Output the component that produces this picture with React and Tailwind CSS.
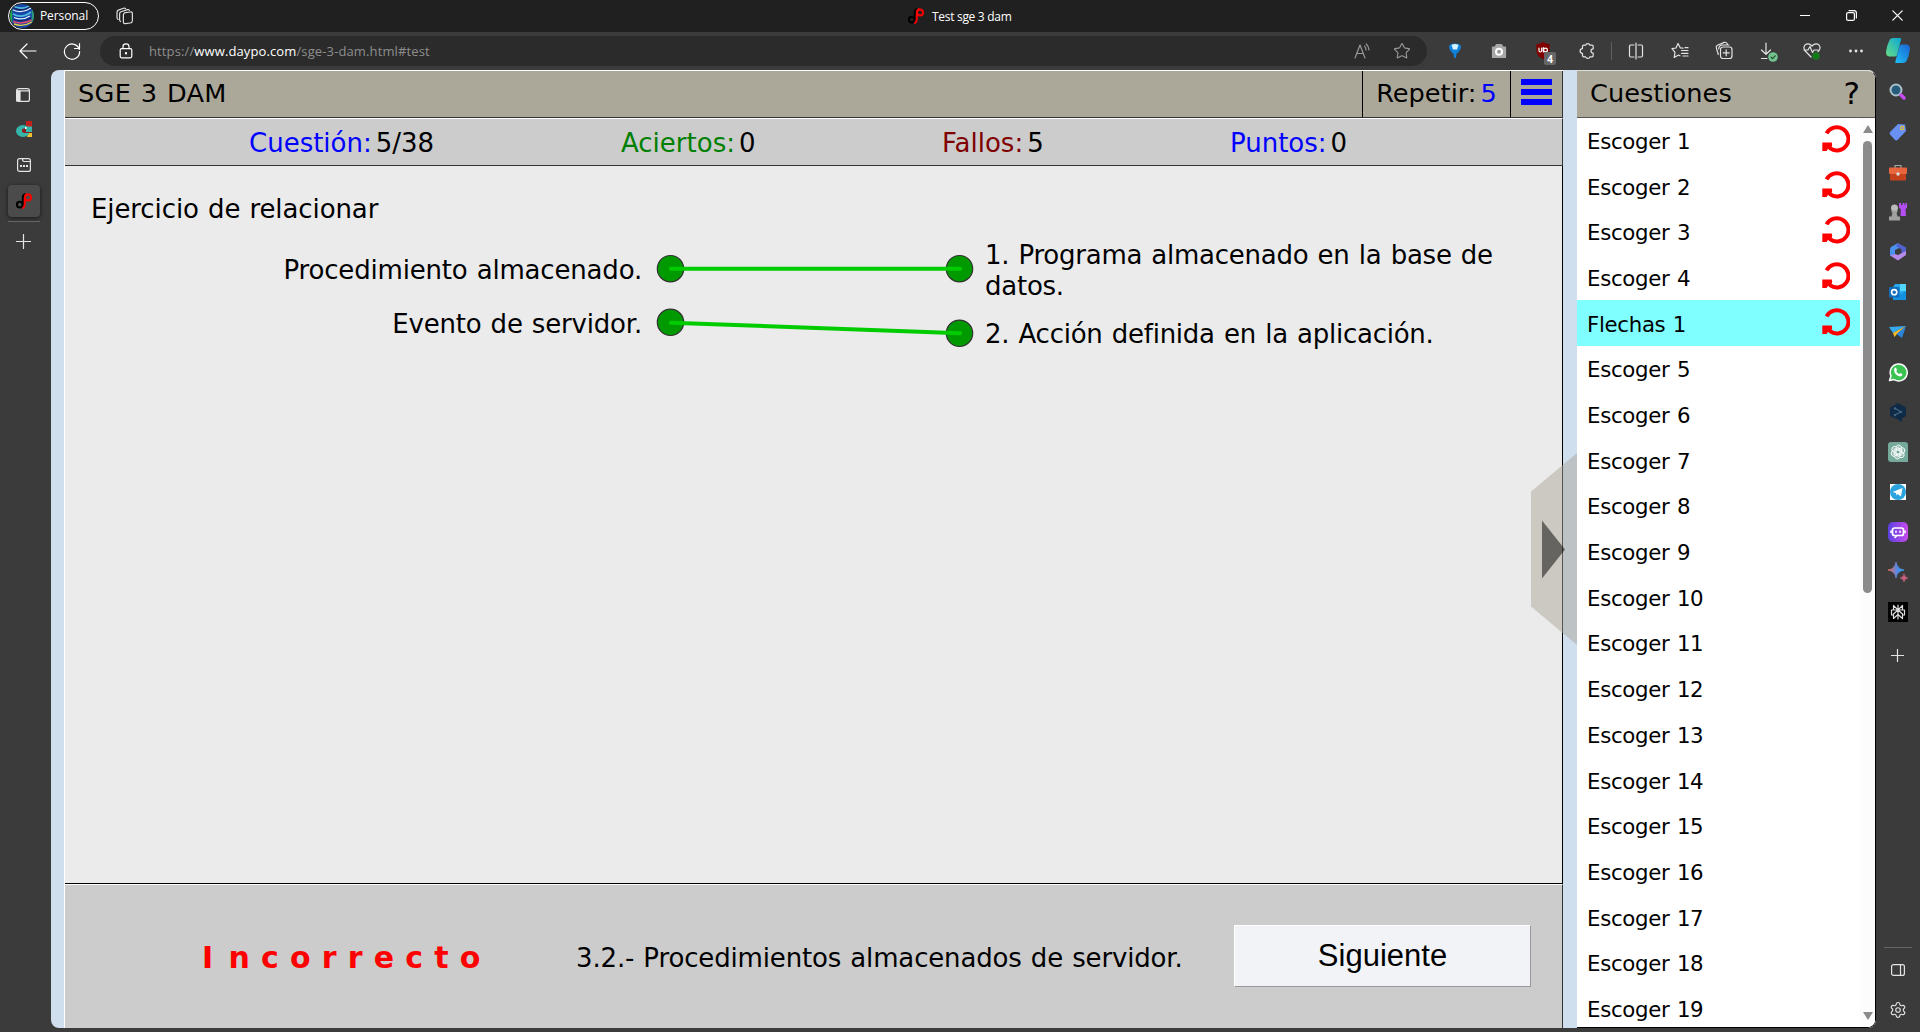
import { Star, Settings } from "lucide-react";

const V = "font-['DejaVu_Sans',sans-serif] whitespace-nowrap leading-none";
const S = "font-['Open_Sans',sans-serif] whitespace-nowrap leading-none";

function Svg({ w = 20, h = 20, vb, children, className = "" }) {
  return (
    <svg width={w} height={h} viewBox={vb || `0 0 ${w} ${h}`} fill="none" stroke="currentColor" strokeWidth="1.2" strokeLinecap="round" strokeLinejoin="round" className={`block shrink-0 ${className}`}>
      {children}
    </svg>
  );
}

const DaypoLogo = () => (
  <Svg w={16} h={16}>
    <g strokeWidth="2">
      <circle cx="3.8" cy="11.6" r="2.9" stroke="#000" />
      <path d="M6.8 11.5V4.5Q6.8 2 9 1.2" stroke="#000" />
      <circle cx="12" cy="4.4" r="3" stroke="#f00" />
      <path d="M11 1.3Q9 2 8.8 5V11Q8.8 14 7 15" stroke="#f00" />
    </g>
  </Svg>
);

const Redo = () => (
  <svg width="28" height="28" viewBox="0 0 28 28" fill="none" className="block">
    <path d="M4.6 8.4A11.6 11.6 0 1 1 8 23.2" stroke="#f00" strokeWidth="4" />
    <path d="M0.3 17.400H9.800L10.200 20L8.500 25L6 24L4.500 26H0.300Z" fill="#f00" />
  </svg>
);

function TitleBar() {
  return (
    <div className="flex h-8 items-center bg-[#202020] text-white">
      <div className="ml-2 flex h-7 w-[91px] items-center rounded-full border border-white">
        <svg width="24" height="24" viewBox="0 0 24 24" className="ml-px block">
          <defs>
            <clipPath id="av"><circle cx="12" cy="12" r="12" /></clipPath>
          </defs>
          <g clipPath="url(#av)" fill="none">
            <rect width="24" height="24" fill="#1746a8" />
            <path d="M3 2Q12 7 21 1M3 10Q12 15 21 8" stroke="#4fb8dd" strokeWidth="1.8" />
            <path d="M3 6Q12 10 21 4M4 13.500Q12 17 20 12" stroke="#dfeefa" strokeWidth="1.300" />
            <path d="M4 4Q12 8 20 3M4 15.500Q13 19 21 14" stroke="#19245f" strokeWidth="1.300" />
            <path d="M3 17.500Q12 21 22 16" stroke="#e34a70" strokeWidth="1.400" />
            <path d="M4 20Q13 23.500 22 18" stroke="#e8d33a" strokeWidth="1.400" />
            <path d="M1 5V19" stroke="#22a548" strokeWidth="2.500" />
            <path d="M23 6V18" stroke="#2a9d7c" strokeWidth="2.500" />
          </g>
        </svg>
        <span className={`${S} ml-[6px] text-[12px] tracking-[-0.1px]`}>Personal</span>
      </div>
      <Svg w={18} h={18} className="ml-[17px] text-[#ddd]">
        <rect x="7.400" y="5" width="9" height="11" rx="2" transform="skewY(-8) translate(0 2)" />
        <path d="M4.500 14.500Q3.600 14 3.600 12.500V7Q3.600 5.400 5 4.800L11.500 2.600Q12.800 2.200 13.300 3.400M2.200 12.500Q1 12 1 10.500V5.300Q1 3.700 2.400 3.100L7.500 1.200Q8.800.8 9.600 1.600" />
      </Svg>
      <div className="ml-[774px] flex items-center gap-2">
        <DaypoLogo />
        <span className={`${S} pt-[2px] text-[12px] tracking-[-0.3px]`}>Test sge 3 dam</span>
      </div>
      <div className="ml-auto flex items-center">
        <div className="flex w-[46px] justify-center"><div className="h-px w-[10px] bg-white" /></div>
        <div className="flex w-[46px] justify-center">
          <Svg w={11} h={11}><rect x="0.6" y="2.6" width="7.8" height="7.8" rx="1.5" /><path d="M3 0.6H8Q10.4.6 10.4 3V8" /></Svg>
        </div>
        <div className="flex w-[46px] justify-center">
          <Svg w={11} h={11}><path d="M.8.8L10.2 10.2M10.2.8L.8 10.2" /></Svg>
        </div>
      </div>
    </div>
  );
}

const Cell = ({ children }) => <div className="flex w-11 shrink-0 items-center justify-center">{children}</div>;

function Toolbar() {
  return (
    <div className="flex h-[38px] items-center bg-[#3b3b3b] text-[#e4e4e4]">
      <Svg w={18} h={16} className="ml-[19px] text-white"><path d="M17 8H1.2M8 1L1 8L8 15" /></Svg>
      <Svg w={18} h={18} className="ml-[26px] text-white"><path d="M16.3 7.5A7.6 7.6 0 1 0 16.6 9.5M16.5 1.5V6.5H11.5" /></Svg>
      <div className="ml-[19px] flex h-[30px] w-[1327px] items-center rounded-full bg-[#2b2b2b]">
        <Svg w={14} h={16} className="ml-[19px] text-white"><rect x="1.2" y="5.6" width="11.6" height="9.2" rx="1.5" /><path d="M4 5.5V3.6Q4 .8 7 .8T10 3.6V5.5" /><circle cx="7" cy="10.3" r=".6" fill="currentColor" /></Svg>
        <span className={`${S} ml-4 pt-[2px] text-[13px] tracking-[0.12px] text-[#8e8e8e]`}>
          https://<span className="text-white">www.daypo.com</span>/sge-3-dam.html#test
        </span>
        <Svg w={16} h={16} className="ml-auto text-[#999]"><path d="M1 15L6 2L11 15M2.700 10.500H9.300M10.500 3.200Q12 4.800 12 7M12.200 1Q15 3.500 15 7" /></Svg>
        <Star size={18} strokeWidth={1.5} className="mr-4 ml-[23px] text-[#999]" />
      </div>
      <div className="ml-[6px] flex">
        <Cell>
          <Svg w={14} h={18}><path d="M1 5Q1 1.500 7 1.500T13 5Q13 8 8.500 12L7.800 16H6.200L5.500 12Q1 8 1 5Z" fill="#1180d8" stroke="none" /><path d="M3.500 3Q7 1 10.500 3L9 7.500H5Z" fill="#d5f3ff" stroke="none" /></Svg>
        </Cell>
        <Cell>
          <Svg w={16} h={16}><path d="M1.500 4H4L5.500 1.500H10.500L12 4H14.500V14.500H1.500Z" fill="#a8a8a8" stroke="#a8a8a8" /><circle cx="8" cy="8.800" r="3" stroke="#fff" strokeWidth="2" fill="#999" /></Svg>
        </Cell>
        <Cell>
          <div className="relative">
            <Svg w={16} h={17}><path d="M8 .5Q11 2.500 14 2.500V8Q14 13.500 8 16.500Q2 13.500 2 8V2.500Q5 2.500 8 .5Z" fill="#800000" stroke="#800000" /><path d="M4 6V8.500Q4 10 5.300 10T6.700 8.500V6M8.300 5.500V10" stroke="#fff" /><circle cx="10.500" cy="8" r="1.900" stroke="#fff" /></Svg>
            <span className={`${S} absolute top-[10px] left-[9px] flex h-[13px] w-3 items-center justify-center rounded-[2px] bg-[#666] text-[10px] font-bold text-white`}>4</span>
          </div>
        </Cell>
        <Cell>
          <Svg w={18} h={18}><path d="M4.500 4.500Q4.500 3.200 5.800 3.200H7.700A2.100 2.100 0 0 1 11.800 3.200H14Q15.200 3.200 15.200 4.500V6.800A2.200 2.200 0 0 0 15.200 11.200V13.500Q15.200 14.800 14 14.800H11.800A2.100 2.100 0 0 1 7.700 14.800H5.800Q4.500 14.800 4.500 13.500V11.400A2.400 2.400 0 0 1 4.500 6.600Z" /></Svg>
        </Cell>
      </div>
      <div className="ml-[2px] h-[18px] w-px bg-[#606060]" />
      <div className="ml-[2px] flex">
        <Cell><Svg w={18} h={18}><path d="M7 3H3.500Q2.500 3 2.500 4.500V13.500Q2.500 15 3.500 15H7M11 3H14.500Q15.500 3 15.500 4.500V13.500Q15.500 15 14.500 15H11M9 1V17" /></Svg></Cell>
        <Cell><Svg w={18} h={18}><path d="M12 6.200L9.400 6L7 1.500L5 6L1 6.700L4 10.400L3.200 15.500L7.500 13L9 13.800M10.500 8.500H17M10.500 11.300H17M12 14H17M14 5.700H17" /></Svg></Cell>
        <Cell><Svg w={18} h={19}><rect x="5.500" y="6" width="11.500" height="11.500" rx="2.500" /><path d="M11.200 8.800V14.800M8.200 11.800H14.200M3.300 13.500L1.300 6.800Q.8 5 2.500 4.300L9.300 1.400Q11.200.8 12 2.400L12.500 3.800M3.700 8Q3.700 4 8 4H14" /></Svg></Cell>
        <Cell>
          <div className="relative">
            <Svg w={16} h={18}><path d="M6 1V12M1.500 8L6 12.300L10.500 8M1.500 16.500H7" /></Svg>
            <Svg w={10} h={10} className="absolute top-[10px] left-[8px]"><circle cx="5" cy="5" r="4.800" fill="#74c48f" stroke="none" /><path d="M3 5.200L4.500 6.700L7.200 3.800" stroke="#234b30" /></Svg>
          </div>
        </Cell>
        <Cell>
          <Svg w={18} h={18}><path d="M8 15L1.800 8.500Q0 5.500 2 3Q5.500.5 9 4Q12.500.5 16 3Q18 5.500 16 8.500L15 9.500M1 8H5L7 4.500L9.500 10.500L11 8H15" /><circle cx="13" cy="14" r="3.800" fill="#127a1b" stroke="none" /></Svg>
        </Cell>
        <Cell><Svg w={16} h={4}><g fill="currentColor" stroke="none"><circle cx="2.500" cy="2" r="1.400" /><circle cx="8" cy="2" r="1.400" /><circle cx="13.500" cy="2" r="1.400" /></g></Svg></Cell>
      </div>
      <svg width="24" height="25" viewBox="0 0 24 25" className="ml-[8px] block">
        <defs>
          <linearGradient id="c1" x1="0" y1="1" x2="1" y2="0"><stop stopColor="#68df85" /><stop offset="1" stopColor="#0aa5d6" /></linearGradient>
          <linearGradient id="c2" x1="0" y1="1" x2="1" y2="0"><stop stopColor="#1cc0f4" /><stop offset="1" stopColor="#1b62d5" /></linearGradient>
        </defs>
        <path d="M7 0H14Q15.500 0 15 2L11 17Q10.500 18.500 9 18.500H3Q0 18 0 14Q1 7 3.500 2Q4.500 0 7 0Z" fill="url(#c1)" />
        <path d="M16 6.500H21Q24 7 24 11Q23 18 20.500 23Q19.500 25 17 25H10Q8.500 25 9.500 23L13.500 8.500Q14 6.500 16 6.500Z" fill="url(#c2)" />
      </svg>
    </div>
  );
}

function LeftRail() {
  return (
    <div className="flex w-[51px] shrink-0 flex-col bg-[#3b3b3b] text-[#e4e4e4]">
      <div className="flex w-[47px] flex-col items-center">
        <Svg w={14} h={14} className="mt-[18px] mr-px"><rect x=".6" y=".6" width="12.800" height="12.800" rx="2" /><path d="M.6 2.800H13.400" /><rect x=".6" y="3" width="3.400" height="10" fill="currentColor" /></Svg>
        <svg width="16" height="16" viewBox="0 0 16 16" className="mt-[19px] ml-px block">
          <path d="M10 0H16V12H10Z" fill="#c4201c" />
          <path d="M12 12H16V16H11Z" fill="#f3bf2d" />
          <ellipse cx="7" cy="10" rx="7" ry="6" fill="#34b5a8" />
          <path d="M10 5.500H16V11H10Z" fill="#34b5a8" />
          <path d="M6 8L10 7V11H16V12H8L6 11Z" fill="#8c1d20" />
          <rect x="9" y="6" width="1.500" height="2" fill="#fff" />
        </svg>
        <Svg w={14} h={14} className="mt-[21px] ml-px"><rect x=".6" y=".6" width="12.800" height="12.800" rx="2" /><path d="M5.500.6Q5.500 3.500 7 3.500H13.400" /><g fill="currentColor" stroke="none"><rect x="3" y="7" width="2" height="2" /><rect x="6" y="7" width="2" height="2" /><rect x="9" y="7" width="2" height="2" /></g></Svg>
        <div className="mt-[13px] ml-px flex h-8 w-8 items-center justify-center rounded-[4px] bg-[#4b4b4b] shadow-[0_1px_4px_rgba(0,0,0,.6)]"><DaypoLogo /></div>
        <div className="mt-1 ml-px h-px w-8 bg-[#666]" />
        <Svg w={15} h={15} className="mt-3"><path d="M7.500.5V14.500M.5 7.500H14.500" /></Svg>
      </div>
    </div>
  );
}

function Stat({ label, value, color, className }) {
  return (
    <div className={`flex shrink-0 ${className}`}>
      <span className={color}>{label}</span>
      <span className="ml-[4px]">{value}</span>
    </div>
  );
}

function Quiz() {
  return (
    <main className={`${V} relative flex w-[1499px] shrink-0 flex-col border-t border-l border-white bg-[#ebebeb] text-[26px] text-black`}>
      <header className="flex h-[47px] items-center border-r border-b border-[#333] bg-[#aca899]">
        <span className="ml-[13px] text-[25.600px] tracking-[0.35px] [word-spacing:1px]">SGE 3 DAM</span>
        <div className="ml-auto flex h-full w-[148px] items-center justify-center border-l border-black"><span className="text-[25.600px]">Repetir:<span className="ml-[4px] text-[#00f]">5</span></span></div>
        <div className="flex h-full w-[52px] flex-col items-center justify-center gap-[4px] border-l border-black pb-[3px]">
          <div className="h-[6px] w-[31px] bg-[#00f]" />
          <div className="h-[6px] w-[31px] bg-[#00f]" />
          <div className="h-[6px] w-[31px] bg-[#00f]" />
        </div>
      </header>
      <section className="flex h-12 items-center border-t border-r border-b border-t-white border-r-[#333] border-b-[#333] bg-[#ccc] pt-[2px]">
        <Stat label="Cuestión:" value="5/38" color="text-[#00f]" className="ml-[184px] w-[372px]" />
        <Stat label="Aciertos:" value="0" color="text-[#008000]" className="w-[321px]" />
        <Stat label="Fallos:" value="5" color="text-[#800000]" className="w-[288px]" />
        <Stat label="Puntos:" value="0" color="text-[#00f]" className="" />
      </section>
      <section className="relative flex h-[718px] flex-col border-r border-b border-black">
        <p className="mt-[30px] ml-[26px] tracking-[-0.1px] [word-spacing:1px]">Ejercicio de relacionar</p>
        <div className="mt-[17px] flex">
          <div className="flex w-[577px] flex-col items-end gap-[28px] pt-[18px] tracking-[-0.18px] [word-spacing:1px]">
            <p>Procedimiento almacenado.</p>
            <p>Evento de servidor.</p>
          </div>
          <svg width="320" height="120" viewBox="642 239 320 120" className="block overflow-visible">
            <g fill="#090" stroke="#333" strokeWidth="1.200">
              <circle cx="670.500" cy="268.700" r="13.200" /><circle cx="959.500" cy="268.700" r="13.200" />
              <circle cx="670.500" cy="322.300" r="13.200" /><circle cx="959.500" cy="333.300" r="13.200" />
            </g>
            <path d="M671 268.800H960M671 322.700L960 333.300" stroke="#0c0" strokeWidth="4" strokeLinecap="round" />
          </svg>
          <div className="ml-[23px] pt-px tracking-[-0.25px] [word-spacing:1.200px]">
            <p className="leading-[31px]">1. Programa almacenado en la base de<br />datos.</p>
            <p className="mt-[17px] leading-[31px]">2. Acción definida en la aplicación.</p>
          </div>
        </div>
      </section>
      <footer className="flex h-[143px] grow items-center border-t border-r border-t-white border-r-[#333] bg-[#ccc]">
        <span className="ml-[137px] w-[374px] pt-[3px] text-[30px] font-bold tracking-[11.200px] text-[#f00]"><span className="mr-[4px]">I</span>ncorrecto</span>
        <span className="pt-[3px] tracking-[-0.15px] [word-spacing:1px]">3.2.- Procedimientos almacenados de servidor.</span>
        <button className="mr-[31px] ml-auto h-[62px] w-[297px] border border-t-white border-r-[#999] border-b-[#999] border-l-white bg-[#f1f3f7] pb-[2px] font-['Liberation_Sans',Arial,sans-serif] text-[31px]">Siguiente</button>
      </footer>
      <svg width="46" height="192" viewBox="0 0 46 192" className="absolute top-[382px] left-[1466px] z-10 block">
        <path d="M0 38.500L46 0V192L0 153.500Z" fill="#aca899" fillOpacity=".5" />
        <path d="M11 67.500V125.500L34 96.500Z" fill="#000" fillOpacity=".5" />
      </svg>
    </main>
  );
}

const items = ["Escoger 1", "Escoger 2", "Escoger 3", "Escoger 4", "Flechas 1", ...Array.from({ length: 15 }, (_, i) => `Escoger ${i + 5}`)];

function Questions() {
  return (
    <aside className={`${V} flex w-[299px] shrink-0 flex-col overflow-hidden rounded-r-lg border-t border-r border-b border-t-[#ddd] border-r-black border-b-black bg-white text-black`}>
      <div className="flex h-[47px] shrink-0 items-center border-b border-[#555] bg-[#aca899] text-[25.600px]">
        <span className="ml-[13px] tracking-[0.05px]">Cuestiones</span>
        <span className="mr-[15px] ml-auto text-[31px]">?</span>
      </div>
      <div className="flex min-h-0 grow">
        <ul className="grow overflow-hidden text-[21.300px] tracking-[-0.32px] [word-spacing:1px]">
          {items.map((t, i) => (
            <li key={t} className={`flex h-[45.700px] items-center pt-[2px] pr-[10px] pl-[10px] ${i === 4 ? "bg-[#7fffff]" : ""}`}>
              <span>{t}</span>
              {i < 5 && <span className="mb-[5px] ml-auto"><Redo /></span>}
            </li>
          ))}
        </ul>
        <div className="flex w-[15px] flex-col items-center bg-[#fcfcfc]">
          <svg width="10" height="8" className="mt-[7px] block"><path d="M0 8L5 0L10 8Z" fill="#8b8b8b" /></svg>
          <div className="mt-2 h-[452px] w-[9px] rounded-full bg-[#8b8b8b]" />
          <svg width="10" height="8" className="mt-auto mb-[7px] block"><path d="M0 0L5 8L10 0Z" fill="#8b8b8b" /></svg>
        </div>
      </div>
    </aside>
  );
}

const apps = [
  <><circle cx="8" cy="8" r="5.500" fill="#275b7c" stroke="#a9bfc9" strokeWidth="2" /><path d="M13 13L16 16" stroke="#c64cf2" strokeWidth="3.500" /></>,
  <><path d="M10 2L17 2.500L18 9L9.500 18Q8 19 6.500 17.500L2 12.500Q1 11 2.500 9.500Z" fill="#6890f5" stroke="none" /><circle cx="14.200" cy="6" r="1.700" stroke="#e5c236" /></>,
  <><path d="M7 6V3.500H13V6" stroke="#a9a9a9" /><rect x="1" y="5.500" width="18" height="6.500" rx="1" fill="#e8663d" stroke="none" /><rect x="2" y="12" width="16" height="6.500" rx="1" fill="#c4431e" stroke="none" /><circle cx="10" cy="12" r="1.700" fill="#ddd" stroke="none" /></>,
  <><circle cx="6.500" cy="6" r="3.500" fill="#bbb" stroke="none" /><path d="M3.500 8.500H9.500V10.500H8.500L9.500 14.500H12V18.500H1V14.500H3.500L4.500 10.500H3.500Z" fill="#a0a0a0" stroke="none" /><path d="M11 1H13V3H14.500V1H16.500V3H17.500V1H19V6L17.500 7L18 14H12.500L12.800 7L11 6Z" fill="#b54ef1" stroke="none" /></>,
  <><path d="M10 1L3 5Q2 6 2 8V14L7 12.500V8L13 5Z" fill="#4a92ee" stroke="none" /><path d="M10 1L18 5.500V13L13.500 12V7.500L8 4Z" fill="#5261cd" stroke="none" /><path d="M18 13L10 18.500L2 13.500L7 12L10 13L18 9Z" fill="#b68be8" stroke="none" /></>,
  <><path d="M7 2H18V18H5V5Z" fill="#28a8ea" stroke="none" /><path d="M12 2H18V9H12Z" fill="#50d9ff" stroke="none" /><path d="M5 17L18 9V18H5Z" fill="#1490df" stroke="none" /><rect x="1" y="5" width="10.500" height="10.500" rx="1" fill="#0f6cbd" stroke="none" /><circle cx="6.200" cy="10.200" r="2.600" stroke="#fff" strokeWidth="1.600" /></>,
  <><path d="M1 5L18 4L5 11Z" fill="#36a8ef" stroke="none" /><path d="M18 4L5 11L6.500 15L8.500 12.500Z" fill="#ffbf22" stroke="none" /><path d="M18 4L8.500 12L14 16Z" fill="#2a83dc" stroke="none" /></>,
  <><path d="M1.500 18.500L3 14A8.500 8.500 0 1 1 6 17.500Z" fill="#3ac351" stroke="#fff" strokeWidth="1.500" /><path d="M6.500 6L8 5.500L9 8L8.300 9.300Q9.500 11.300 11.200 12L12.500 11L14.500 12.200Q14 14.500 12 14.500Q7 13.500 6 8.500Z" fill="#fff" stroke="none" /></>,
  <><path d="M10 1L18 5.500V14L14 16.500V20L9 17L2 14V5.500Z" fill="#0f2b46" stroke="none" /><path d="M8 7L12.500 9.500M11.500 10.500L8 12.500" stroke="#456684" /><g fill="#456684" stroke="none"><circle cx="7" cy="6.500" r="1.200" /><circle cx="13" cy="10" r="1.200" /><circle cx="7" cy="13" r="1.200" /></g></>,
  <><path d="M3 0H17Q20 0 20 3V20H3Q0 20 0 17V3Q0 0 3 0Z" fill="#75a99c" stroke="none" />{[0, 60, 120, 180, 240, 300].map((a) => <path key={a} transform={`rotate(${a} 10 10)`} d="M8 11V5.500Q8.300 3 10.800 3Q13.500 3.300 13.600 6M8 7.800L11 6L15 8.300" stroke="#fff" strokeWidth=".9" />)}</>,
  <><rect x="2" y="2" width="16" height="16" fill="#fff" stroke="none" /><circle cx="10" cy="10" r="8" fill="#2aa3df" stroke="none" /><path d="M4.500 10L14.500 6L13 14.500L9.500 12L8.500 13.500L8 11Z" fill="#fff" stroke="none" /></>,
  <><rect width="20" height="20" rx="5" fill="url(#poe)" stroke="none" /><rect x="4.500" y="6" width="11" height="7.500" rx="2" stroke="#fff" strokeWidth="1.700" /><path d="M3 9V10.500M17 9V10.500M8 9.200V10.200M12 9.200V10.200M7 15.500L8.500 14" stroke="#fff" strokeWidth="1.600" /></>,
  <><path d="M8 0Q9 7 16 8Q9 9 8 16Q7 9 0 8Q7 7 8 0Z" fill="url(#gem)" stroke="url(#gem)" strokeWidth=".8" /><path d="M16 12Q16.500 15.500 20 16Q16.500 16.500 16 20Q15.500 16.500 12 16Q15.500 15.500 16 12Z" fill="#c9607e" stroke="#c9607e" strokeWidth=".6" /></>,
  <><rect width="20" height="20" fill="#000" stroke="none" /><path d="M10 3V17M10 8L5.500 3.500V8M10 8L14.500 3.500V8M3.500 8H16.500V13H14.500M3.500 8V13H5.500M10 8L5.500 12V16.500L10 12.500L14.500 16.500V12L10 8" stroke="#ddd" strokeWidth="1.200" /></>,
];

function RightRail() {
  return (
    <div className="flex w-[44px] shrink-0 flex-col items-center bg-[#3b3b3b] pt-[2px] text-[#e4e4e4]">
      <svg width="0" height="0" className="block">
        <defs>
          <linearGradient id="poe"><stop stopColor="#5a42df" /><stop offset="1" stopColor="#c84aed" /></linearGradient>
          <linearGradient id="gem"><stop stopColor="#ec6a5c" /><stop offset=".6" stopColor="#4e8bea" /><stop offset="1" stopColor="#3aa5ee" /></linearGradient>
        </defs>
      </svg>
      {apps.map((a, i) => <div key={i} className="flex h-10 shrink-0 items-center"><Svg>{a}</Svg></div>)}
      <Svg w={13} h={13} className="mt-[17px] mr-px"><path d="M6.500.5V12.500M.5 6.500H12.500" /></Svg>
      <div className="mt-auto h-px w-7 bg-[#666]" />
      <Svg w={14} h={12} className="mt-4"><rect x=".6" y=".6" width="12.800" height="10.800" rx="2" /><path d="M9.500.6V11.400" /></Svg>
      <Settings size={18} strokeWidth={1.500} className="mt-[25px] mb-[13px]" />
    </div>
  );
}

export default function App() {
  return (
    <div className="flex h-[1032px] w-[1920px] flex-col overflow-hidden bg-[#3b3b3b]">
      <TitleBar />
      <Toolbar />
      <div className="flex min-h-0 grow">
        <LeftRail />
        <div className="mb-1 flex w-[1825px] shrink-0 overflow-hidden rounded-lg bg-[#cfdfee]">
          <div className="w-[13px] shrink-0" />
          <Quiz />
          <div className="w-[14px] shrink-0" />
          <Questions />
        </div>
        <RightRail />
      </div>
    </div>
  );
}
